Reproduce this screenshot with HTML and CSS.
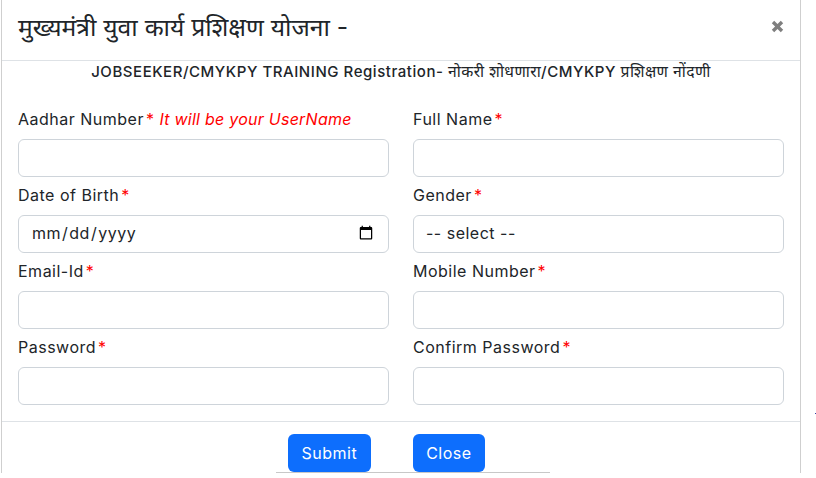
FILE: index.html
```html
<!DOCTYPE html>
<html lang="mr">
<head>
    <meta charset="UTF-8" />
    <title>मुख्यमंत्री युवा कार्य प्रशिक्षण योजना</title>
    <link rel="stylesheet" href="styles.css">
</head>
<body>
    <div class="modal">
        <div class="modal-header">
            <h4 class="modal-title">मुख्यमंत्री युवा कार्य प्रशिक्षण योजना -</h4>
            <button type="button" class="btn-x" aria-label="Close">
                <svg viewBox="0 0 13 13" width="13" height="13"><path d="M0.8 3.2 3.2 0.8 6.5 4.1 9.8 0.8 12.2 3.2 8.9 6.5 12.2 9.8 9.8 12.2 6.5 8.9 3.2 12.2 0.8 9.8 4.1 6.5Z"/></svg>
            </button>
        </div>
        <div class="modal-body">
            <h6 class="form-heading">JOBSEEKER/CMYKPY TRAINING Registration- <span class="deva">नोकरी शोधणारा</span>/CMYKPY <span class="deva">प्रशिक्षण नोंदणी</span></h6>
            <form class="form-grid">
                <div class="field">
                    <label>Aadhar Number<span class="req">*</span> <em class="hint">It will be your UserName</em></label>
                    <input type="text" class="form-control">
                </div>
                <div class="field">
                    <label>Full Name<span class="req">*</span></label>
                    <input type="text" class="form-control">
                </div>
                <div class="field">
                    <label>Date of Birth<span class="req">*</span></label>
                    <input type="date" class="form-control">
                </div>
                <div class="field">
                    <label>Gender<span class="req">*</span></label>
                    <select class="form-control">
                        <option>-- select --</option>
                        <option>Male</option>
                        <option>Female</option>
                    </select>
                </div>
                <div class="field">
                    <label>Email-Id<span class="req">*</span></label>
                    <input type="text" class="form-control">
                </div>
                <div class="field">
                    <label>Mobile Number<span class="req">*</span></label>
                    <input type="text" class="form-control">
                </div>
                <div class="field">
                    <label>Password<span class="req">*</span></label>
                    <input type="password" class="form-control">
                </div>
                <div class="field">
                    <label>Confirm Password<span class="req">*</span></label>
                    <input type="password" class="form-control">
                </div>
            </form>
        </div>
        <div class="modal-footer">
            <div class="footer-buttons">
                <button type="button" class="btn btn-submit">Submit</button>
                <button type="button" class="btn btn-close">Close</button>
            </div>
            <div class="footer-rule"></div>
        </div>
    </div>
    <div class="stray-dot"></div>
</body>
</html>
```

FILE: styles.css
```css
html, body {
    height: 478px;
    overflow: hidden;
}
body {
    margin: 0;
    background-color: #fff;
    color: #212529;
    font-family: "Inter", "Noto Sans", "Noto Sans Devanagari", sans-serif;
    font-size: 16px;
    letter-spacing: 0.5px;
}
.modal {
    width: 798px;
    margin-left: 1px;
    border-left: 1px solid #cfcfcf;
    border-right: 1px solid #cfcfcf;
}
.modal-header {
    display: flex;
    align-items: center;
    justify-content: space-between;
    height: 53px;
    padding: 0 16px 7px;
    border-bottom: 1px solid #dee2e6;
}
.modal-title {
    margin: 0;
    font-size: 24.7px;
    font-weight: 400;
    line-height: 52px;
    letter-spacing: 0;
}
.btn-x {
    border: none;
    background: none;
    padding: 0;
    display: flex;
    fill: #7f7f7f;
}
.modal-body {
    height: 360px;
    box-sizing: border-box;
    padding: 0 16px;
}
.form-heading {
    margin: 0 0 18px;
    font-size: 15px;
    font-weight: 500;
    line-height: 22px;
    letter-spacing: 0.55px;
    text-align: center;
}
.deva {
    font-size: 15.7px;
    font-weight: 400;
    letter-spacing: 0.4px;
}
.form-grid {
    display: grid;
    grid-template-columns: 371px 371px;
    column-gap: 24px;
}
.field {
    height: 76px;
}
.field label {
    display: block;
    height: 24px;
    margin-top: 6px;
    margin-bottom: 8px;
    line-height: 24px;
    white-space: nowrap;
}
.req {
    color: #f00;
    margin-left: 2px;
}
.hint {
    color: #f00;
    letter-spacing: 0.25px;
}
.form-control {
    display: block;
    width: 100%;
    height: 38px;
    box-sizing: border-box;
    padding: 5px 12px 7px;
    border: 1px solid #ced4da;
    border-radius: 6px;
    background-color: #fff;
    color: #212529;
    font-family: inherit;
    font-size: 16px;
    letter-spacing: 0.5px;
    appearance: none;
}
.modal-footer {
    border-top: 1px solid #dee2e6;
}
.footer-buttons {
    display: flex;
    justify-content: flex-start;
    gap: 42px;
    padding: 12px 0 0 286px;
}
.btn {
    height: 38px;
    padding: 0 13.5px 1px;
    border: none;
    border-radius: 6px;
    background-color: #0d6efd;
    color: #fff;
    font-family: inherit;
    font-size: 16px;
    letter-spacing: 0.5px;
}
.footer-rule {
    width: 274px;
    margin-left: 274px;
    border-top: 1px solid #c8c8c8;
}
.stray-dot {
    position: absolute;
    left: 815px;
    top: 413px;
    width: 1px;
    height: 1px;
    background-color: #3344aa;
}
```
